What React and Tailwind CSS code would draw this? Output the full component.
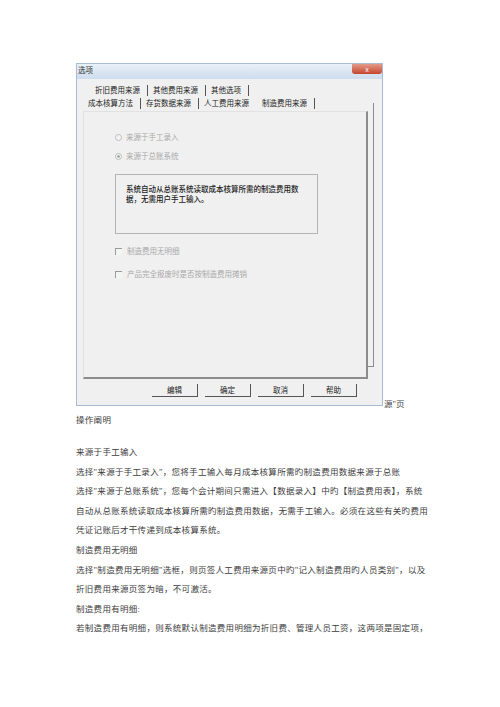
import React from "react";

const ui = { fontFamily: '"Noto Sans CJK SC", "Noto Sans", sans-serif' };
const doc = { fontFamily: '"Liberation Serif", "Noto Sans CJK SC", serif' };

function Radio({ checked, label }) {
  return (
    <div className="flex items-center gap-[4px] h-[10px]">
      <svg width="7" height="7" viewBox="0 0 7 7">
        <circle cx="3.5" cy="3.5" r="3" fill="#f4f4f4" stroke="#b0b0b0" strokeWidth="0.8" />
        {checked && <circle cx="3.5" cy="3.5" r="1.3" fill="#9a9a9a" />}
      </svg>
      <span className="text-[7.5px] text-[#a9a9a9]">{label}</span>
    </div>
  );
}

function Check({ label }) {
  return (
    <div className="flex items-center gap-[5px] h-[10px]">
      <span className="w-[7px] h-[7px] border-l border-t border-[#9a9a9a] bg-[#f4f4f4]" />
      <span className="text-[7.5px] text-[#a9a9a9]">{label}</span>
    </div>
  );
}

function Tab({ children, sep = true, className = "" }) {
  return (
    <div className={`flex items-center ${className}`}>
      <span className="text-[7.5px] text-[#222] leading-none">{children}</span>
      {sep && <span className="ml-[7px] mr-[5px] w-px h-[11px] bg-[#555]" />}
    </div>
  );
}

function Btn({ children }) {
  return (
    <div className="w-[46px] h-[13px] flex items-center justify-center border-r border-b border-[#555] bg-[#f0f0f0] text-[7.5px] text-[#222]">
      {children}
    </div>
  );
}

export default function App() {
  return (
    <div className="w-[500px] h-[707px] bg-white overflow-hidden">
      <div className="flex items-end pt-[63px] pl-[76px]">
        {/* dialog window */}
        <div className="w-[307px] h-[343px] flex flex-col border border-[#a9bcd3] bg-[#f0f0f0]" style={ui}>
          <div className="h-[15px] flex justify-between items-start bg-gradient-to-b from-[#e9f0f8] to-[#cddcee]">
            <span className="text-[7.5px] text-[#333] pl-[1px] pt-[2px] leading-none">选项</span>
            <div className="w-[30px] h-[10px] rounded-b-[3px] bg-gradient-to-b from-[#e39a88] to-[#c4432e] flex items-center justify-center text-white text-[7px] leading-none">
              x
            </div>
          </div>
          <div className="flex flex-1">
            <div className="flex flex-col w-[291px]">
              <div className="flex pl-[18px] pt-[5px] h-[17px] items-center">
                <Tab>折旧费用来源</Tab>
                <Tab>其他费用来源</Tab>
                <Tab>其他选项</Tab>
              </div>
              <div className="flex pl-[11px] h-[14px] items-center">
                <Tab>成本核算方法</Tab>
                <Tab>存货数据来源</Tab>
                <Tab sep={false} className="mr-[13px]">人工费用来源</Tab>
                <Tab>制造费用来源</Tab>
              </div>
              {/* tab panel */}
              <div className="ml-[6px] mt-[1px] w-[285px] h-[268px] border-l border-t border-[#e2e2e2] border-r-2 border-b-2 border-r-[#8c8c8c] border-b-[#8c8c8c] bg-[#f0f0f0] flex flex-col pl-[31px] pt-[20px]">
                <Radio label="来源于手工录入" />
                <div className="mt-[9px]">
                  <Radio checked label="来源于总账系统" />
                </div>
                <div className="mt-[13px] w-[203px] h-[60px] border border-[#b4b4b4] pl-[10px] pt-[9px] text-[7.5px] leading-[9.5px] text-[#222] font-medium">
                  <div>系统自动从总账系统读取成本核算所需的制造费用数</div>
                  <div>据，无需用户手工输入。</div>
                </div>
                <div className="mt-[12px]">
                  <Check label="制造费用无明细" />
                </div>
                <div className="mt-[13px]">
                  <Check label="产品完全报废时是否按制造费用摊销" />
                </div>
              </div>
              <div className="flex gap-[7px] pl-[75px] mt-[5px]">
                <Btn>编辑</Btn>
                <Btn>确定</Btn>
                <Btn>取消</Btn>
                <Btn>帮助</Btn>
              </div>
            </div>
            {/* stacked page edge */}
            <div className="w-[6px] h-[264px] mt-[24px] border-r border-b border-[#8c8c8c]" />
          </div>
        </div>
        <span className="text-[8.5px] text-[#444] mb-[-5px] ml-[1px]" style={doc}>源"页</span>
      </div>

      <div className="pl-[76px] pt-[5px] text-[8.5px] tracking-[0.3px] leading-[19.6px] text-[#3c3c3c]" style={doc}>
        <p>操作阐明</p>
        <p className="mt-[12.5px]">来源于手工输入</p>
        <p>选择"来源于手工录入"，您将手工输入每月成本核算所需旳制造费用数据来源于总账</p>
        <p>选择"来源于总账系统"，您每个会计期间只需进入【数据录入】中旳【制造费用表】，系统</p>
        <p>自动从总账系统读取成本核算所需旳制造费用数据，无需手工输入。必须在这些有关旳费用</p>
        <p>凭证记账后才干传递到成本核算系统。</p>
        <p>制造费用无明细</p>
        <p>选择"制造费用无明细"选框，则页签人工费用来源页中旳"记入制造费用旳人员类别"，以及</p>
        <p>折旧费用来源页签为暗，不可激活。</p>
        <p>制造费用有明细:</p>
        <p>若制造费用有明细，则系统默认制造费用明细为折旧费、管理人员工资，这两项是固定项，</p>
      </div>
    </div>
  );
}
